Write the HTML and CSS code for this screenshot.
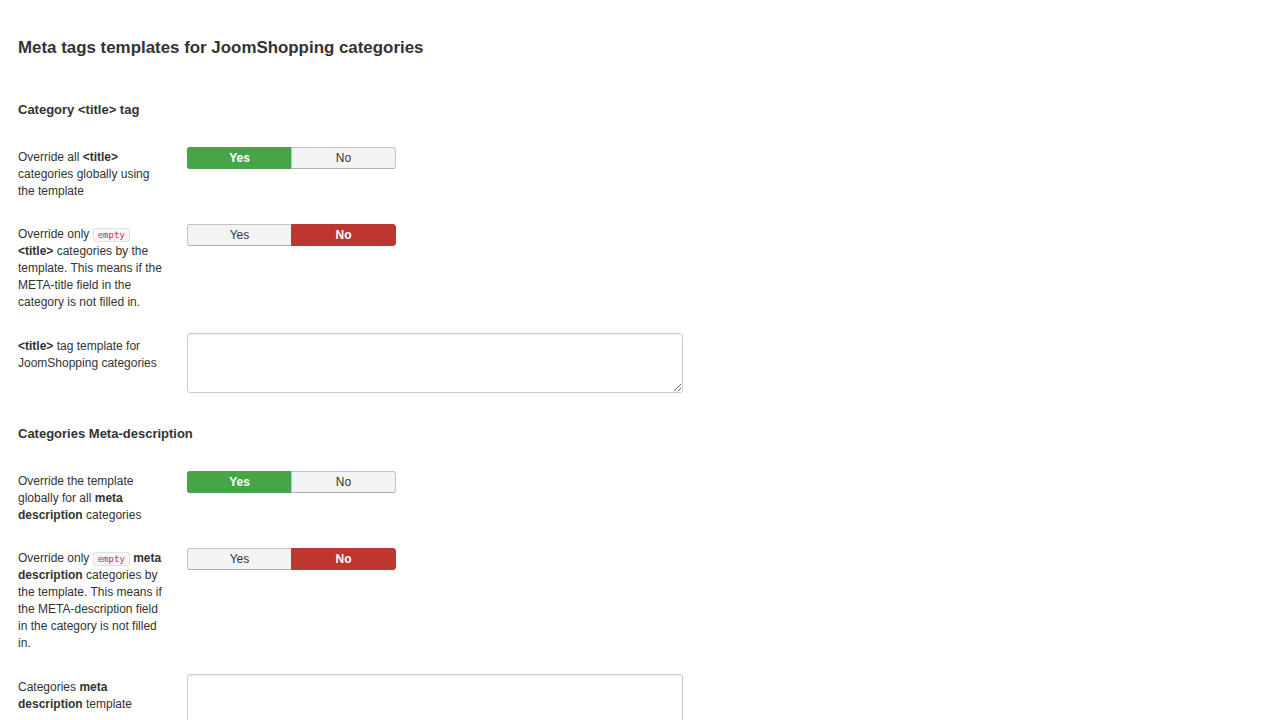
FILE: index.html
```html
<!DOCTYPE html>
<html>
<head>
<meta charset="utf-8">
<link rel="stylesheet" href="styles.css">
</head>
<body>
<div class="page">
  <h1 class="page-title">Meta tags templates for JoomShopping categories</h1>

  <h2 class="section-title">Category &lt;title&gt; tag</h2>

  <div class="group">
    <div class="label">Override all <b>&lt;title&gt;</b> categories globally using the template</div>
    <div class="toggle">
      <span class="opt yes-on">Yes</span><span class="opt">No</span>
    </div>
  </div>

  <div class="group tight">
    <div class="label">Override only <code class="code">empty</code> <b>&lt;title&gt;</b> categories by the template. This means if the META-title field in the category is not filled in.</div>
    <div class="toggle">
      <span class="opt">Yes</span><span class="opt no-on">No</span>
    </div>
  </div>

  <div class="group">
    <div class="label label-text"><b>&lt;title&gt;</b> tag template for JoomShopping categories</div>
    <textarea class="area"></textarea>
  </div>

  <h2 class="section-title section-gap">Categories Meta-description</h2>

  <div class="group">
    <div class="label">Override the template globally for all <b>meta description</b> categories</div>
    <div class="toggle">
      <span class="opt yes-on">Yes</span><span class="opt">No</span>
    </div>
  </div>

  <div class="group tight">
    <div class="label">Override only <code class="code">empty</code> <b>meta description</b> categories by the template. This means if the META-description field in the category is not filled in.</div>
    <div class="toggle">
      <span class="opt">Yes</span><span class="opt no-on">No</span>
    </div>
  </div>

  <div class="group">
    <div class="label label-text">Categories <b>meta description</b> template</div>
    <textarea class="area"></textarea>
  </div>
</div>
</body>
</html>
```

FILE: styles.css
```css
html, body {
  margin: 0;
  padding: 0;
  background: #fff;
}

.page {
  padding: 38px 18px 0;
  font-family: "Liberation Sans", Arial, sans-serif;
  font-size: 12px;
  line-height: 17px;
  color: #333;
}

.page-title {
  margin: 0 0 43px;
  font-size: 16.9px;
  line-height: 20px;
  font-weight: bold;
  color: #333;
}

.section-title {
  margin: 0 0 29px;
  font-size: 13px;
  line-height: 17px;
  font-weight: bold;
  color: #333;
}

.section-gap {
  margin-top: 32px;
}

.group {
  display: flex;
  align-items: flex-start;
  margin-bottom: 24px;
}

.group.tight {
  margin-bottom: 22px;
}

.label {
  width: 150px;
  margin-right: 19px;
  padding-top: 2px;
  flex: none;
}

.label b {
  font-weight: bold;
}

.label-text {
  padding-top: 5px;
}

.code {
  font-family: "DejaVu Sans Mono", "Liberation Mono", monospace;
  font-size: 9px;
  line-height: 10px;
  color: #d0294f;
  background: #f7f7f9;
  border: 1px solid #e1e1e8;
  border-radius: 3px;
  padding: 1px 4px;
}

.toggle {
  display: flex;
  width: 209px;
  height: 22px;
  flex: none;
}

.opt {
  flex: 1;
  display: flex;
  align-items: center;
  justify-content: center;
  font-size: 12px;
  color: #333;
  background: #f3f3f3;
  border: 1px solid #c4c4c4;
  border-bottom-color: #b0b0b0;
  box-sizing: border-box;
}

.opt:first-child {
  border-radius: 3px 0 0 3px;
  border-right: none;
}

.opt:last-child {
  border-radius: 0 3px 3px 0;
}

.yes-on {
  background: #46a546;
  border-color: #46a546;
  color: #fff;
  font-weight: bold;
}

.no-on {
  background: #bd362f;
  border-color: #bd362f;
  color: #fff;
  font-weight: bold;
}

.area {
  width: 496px;
  height: 60px;
  box-sizing: border-box;
  margin: 0;
  border: 1px solid #ccc;
  border-radius: 3px;
  box-shadow: inset 0 1px 1px rgba(0, 0, 0, 0.075);
  background: #fff;
  flex: none;
  font-family: inherit;
}
```
